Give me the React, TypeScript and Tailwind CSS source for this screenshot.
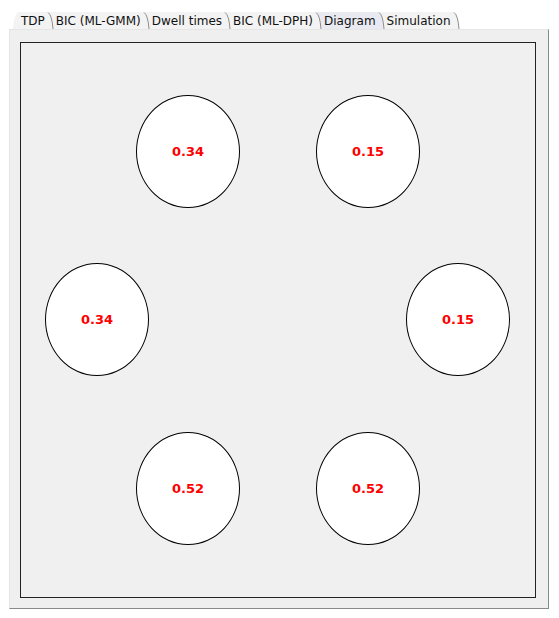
import React from 'react';

const tabs = ['TDP', 'BIC (ML-GMM)', 'Dwell times', 'BIC (ML-DPH)', 'Diagram', 'Simulation'];
const selected = 'Diagram';

const TAB_BG = '#f3f3f3';
const TAB_SEL = '#e9e9f1';

const nodes = [
  { label: '0.34', left: 115, top: 52 },
  { label: '0.15', left: 295, top: 52 },
  { label: '0.34', left: 24, top: 220 },
  { label: '0.15', left: 385, top: 220 },
  { label: '0.52', left: 115, top: 389 },
  { label: '0.52', left: 295, top: 389 },
];

const Separator: React.FC<{ prev: string; next: string }> = ({ prev, next }) => (
  <svg width="11" height="17" viewBox="0 0 11 17" className="block shrink-0">
    <path d="M0 0 L3 0 Q7 3 8 17 L0 17 Z" fill={prev} />
    {next !== 'none' && <path d="M3 0 L11 0 L11 17 L8 17 Q7 3 3 0 Z" fill={next} />}
    <path d="M3 0.5 Q7 3 8 17" fill="none" stroke="#8e8e8e" strokeWidth="1" />
  </svg>
);

const App: React.FC = () => {
  return (
    <div className="w-[559px] h-[618px] bg-white pt-[12px] font-['DejaVu_Sans',sans-serif]">
      <div className="flex items-stretch h-[17px] pl-[13px] text-[12px] leading-[18px] text-[#111]">
        <svg width="8" height="17" viewBox="0 0 8 17" className="block shrink-0">
          <path d="M8 0 L5 0 Q1 3 0 17 L8 17 Z" fill={TAB_BG} />
        </svg>
        {tabs.map((t, i) => {
          const bg = t === selected ? TAB_SEL : TAB_BG;
          const nextTab = tabs[i + 1];
          const nextBg = nextTab ? (nextTab === selected ? TAB_SEL : TAB_BG) : 'none';
          return (
            <React.Fragment key={t}>
              <div className="whitespace-nowrap" style={{ background: bg }}>{t}</div>
              <Separator prev={bg} next={nextBg} />
            </React.Fragment>
          );
        })}
      </div>
      <div className="ml-[9px] w-[540px] h-[580px] bg-[#efefef] border-l border-t border-l-[#e3e3ea] border-t-[#e6e6e6] border-r border-b border-r-[#8a8a8a] border-b-[#8a8a8a] pl-[10px] pt-[12px]">
        <div className="relative w-[516px] h-[556px] border border-[#222] bg-[#f0f0f0]">
          {nodes.map((n, i) => (
            <div
              key={i}
              className="absolute w-[104px] h-[113px] rounded-[50%] border border-black bg-white flex items-center justify-center"
              style={{ left: n.left, top: n.top }}
            >
              <span className="text-[13px] font-bold text-[#ff0000]">{n.label}</span>
            </div>
          ))}
        </div>
      </div>
    </div>
  );
};

export default App;
